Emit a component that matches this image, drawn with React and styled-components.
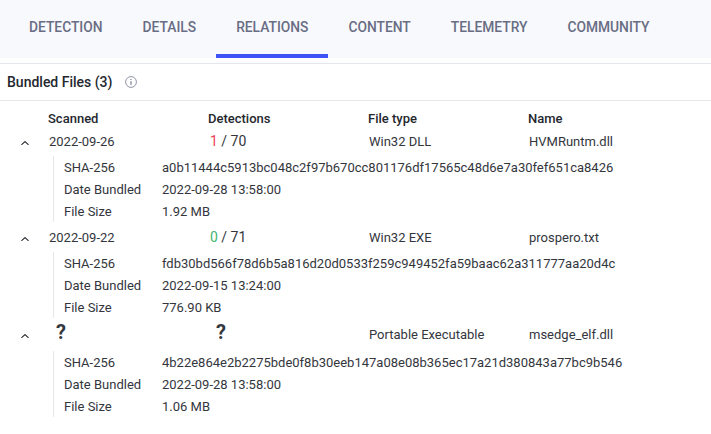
import styled, { createGlobalStyle } from 'styled-components'

const GlobalStyle = createGlobalStyle`
    html, body {
        margin: 0;
        padding: 0;
        background: #fff;
        font-family: Roboto, "Liberation Sans", sans-serif;
        color: #24272e;
    }
`

const Page = styled.div`
    width: 711px;
    height: 434px;
    overflow: hidden;
`

const TabBar = styled.div`
    display: flex;
    height: 58px;
    padding-left: 9px;
    background: #f8f9fc;
`

const Tab = styled.div`
    display: flex;
    align-items: center;
    height: 58px;
    box-sizing: border-box;
    padding: 0 20px;
    font-size: 13.8px;
    font-weight: 500;
    color: #686d84;
    border-bottom: 4px solid ${p => (p.$active ? '#3d53f5' : 'transparent')};
`

const Title = styled.div`
    display: flex;
    align-items: center;
    gap: 13px;
    height: 36px;
    margin-top: 5px;
    padding-left: 7px;
    border-top: 1px solid #e6e7ea;
    border-bottom: 1px solid #e6e7ea;
    font-size: 14px;
    font-weight: 500;
    color: #24272e;

    svg {
        display: block;
    }
`

const Header = styled.div`
    display: grid;
    grid-template-columns: repeat(4, 160px);
    padding: 10px 0 0 48px;
    height: 16px;
    line-height: 16px;
    font-size: 13px;
    font-weight: 500;
`

const Row = styled.div`
    display: grid;
    grid-template-columns: 48px repeat(4, 160px);
    align-items: center;
    height: ${p => p.$height || 22}px;
    margin-top: ${p => p.$top || 0}px;
    font-size: 13px;
    color: #33363d;

    svg {
        display: block;
        margin-left: 21px;
        margin-top: 4px;
    }
`

const Cell = styled.div`
    padding-left: 1px;
`

const Unknown = styled.div`
    padding-left: 8px;
    margin-top: -4px;
    font-size: 20px;
    line-height: 24px;
    font-weight: 700;
    color: #33363d;
`

const Score = styled.div`
    padding-left: 2px;
    font-size: 14px;
`

const Hit = styled.span`
    color: ${p => (p.$clean ? '#3fb56f' : '#ee3f55')};
`

const Details = styled.div`
    margin: ${p => p.$top || 4}px 0 0 53px;
    padding-left: 10px;
    border-left: 1px solid #e6e7ea;
`

const DetailRow = styled.div`
    display: flex;
    align-items: center;
    height: 22px;
    font-size: 13px;
    color: #33363d;
`

const Label = styled.div`
    width: 98px;
`

const Chevron = () => (
    <svg width="8" height="4" viewBox="0 0 8 4" fill="none">
        <path d="M.4 3.8L4 .6l3.6 3.2" stroke="#24272e" strokeWidth="1.1" />
    </svg>
)

const InfoIcon = () => (
    <svg width="12" height="12" viewBox="0 0 12 12" fill="none">
        <circle cx="6" cy="6" r="5.4" stroke="#85889a" strokeWidth="0.9" />
        <path d="M6 5.2v3.6M6 3v1.1" stroke="#85889a" strokeWidth="1.3" />
    </svg>
)

const files = [
    {
        scanned: '2022-09-26', hits: 1, total: 70, type: 'Win32 DLL', name: 'HVMRuntm.dll',
        sha: 'a0b11444c5913bc048c2f97b670cc801176df17565c48d6e7a30fef651ca8426',
        bundled: '2022-09-28 13:58:00', size: '1.92 MB',
    },
    {
        scanned: '2022-09-22', hits: 0, total: 71, type: 'Win32 EXE', name: 'prospero.txt',
        sha: 'fdb30bd566f78d6b5a816d20d0533f259c949452fa59baac62a311777aa20d4c',
        bundled: '2022-09-15 13:24:00', size: '776.90 KB',
    },
    {
        type: 'Portable Executable', name: 'msedge_elf.dll',
        sha: '4b22e864e2b2275bde0f8b30eeb147a08e08b365ec17a21d380843a77bc9b546',
        bundled: '2022-09-28 13:58:00', size: '1.06 MB',
    },
]

const tabs = ['DETECTION', 'DETAILS', 'RELATIONS', 'CONTENT', 'TELEMETRY', 'COMMUNITY']

export default function App() {
    return (
        <Page>
            <GlobalStyle />
            <TabBar>
                {tabs.map(t => (
                    <Tab key={t} $active={t === 'RELATIONS'}>{t}</Tab>
                ))}
            </TabBar>
            <Title>
                Bundled Files (3)
                <InfoIcon />
            </Title>
            <Header>
                <div>Scanned</div>
                <div>Detections</div>
                <div>File type</div>
                <div>Name</div>
            </Header>
            {files.map((f, i) => (
                <div key={f.name}>
                    <Row $top={i === 0 ? 3 : 4} $height={i === 2 ? 24 : 22}>
                        <Chevron />
                        {f.scanned ? <Cell>{f.scanned}</Cell> : <Unknown>?</Unknown>}
                        {f.scanned ? (
                            <Score><Hit $clean={f.hits === 0}>{f.hits}</Hit> / {f.total}</Score>
                        ) : (
                            <Unknown>?</Unknown>
                        )}
                        <Cell>{f.type}</Cell>
                        <Cell>{f.name}</Cell>
                    </Row>
                    <Details $top={i === 2 ? 5 : 4}>
                        <DetailRow><Label>SHA-256</Label>{f.sha}</DetailRow>
                        <DetailRow><Label>Date Bundled</Label>{f.bundled}</DetailRow>
                        <DetailRow><Label>File Size</Label>{f.size}</DetailRow>
                    </Details>
                </div>
            ))}
        </Page>
    )
}
